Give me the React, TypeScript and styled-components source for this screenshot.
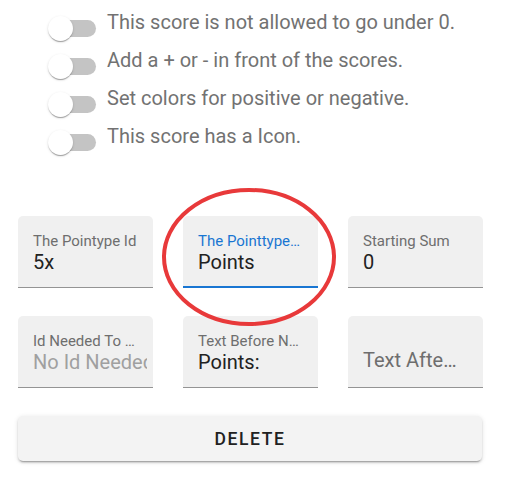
import React from "react";
import styled, { createGlobalStyle } from "styled-components";

const GlobalStyle = createGlobalStyle`
  html, body { margin: 0; padding: 0; background: #ffffff; }
  body { font-family: Roboto, "Liberation Sans", Arial, sans-serif; }
`;

const Page = styled.div`
  position: relative;
  width: 515px;
  height: 481px;
  padding: 9px 18px 0 18px;
  box-sizing: border-box;
`;

const SwitchList = styled.div`
  display: flex;
  flex-direction: column;
  padding-left: 30px;
`;

const SwitchRow = styled.div`
  display: flex;
  align-items: flex-start;
  height: 38px;
`;

const SwitchBox = styled.div`
  position: relative;
  width: 49px;
  height: 38px;
  flex-shrink: 0;
`;

const Track = styled.div`
  position: absolute;
  left: 6px;
  top: 10.5px;
  width: 42px;
  height: 17px;
  border-radius: 8.5px;
  background: #c4c4c4;
`;

const Thumb = styled.div`
  position: absolute;
  left: 0;
  top: 6.5px;
  width: 25px;
  height: 25px;
  border-radius: 50%;
  background: #ffffff;
  box-shadow: 0 2px 1px -1px rgba(0, 0, 0, 0.2), 0 1px 1px 0 rgba(0, 0, 0, 0.14),
    0 1px 3px 0 rgba(0, 0, 0, 0.12);
`;

const SwitchLabel = styled.span`
  margin-left: 10px;
  margin-top: 0;
  font-size: 20px;
  line-height: 26px;
  color: #727272;
  white-space: nowrap;
`;

const FieldGrid = styled.div`
  display: grid;
  grid-template-columns: repeat(3, 135px);
  column-gap: 30px;
  row-gap: 28px;
  margin-top: 55px;
`;

const Field = styled.div<{ $focused?: boolean }>`
  position: relative;
  height: 72px;
  box-sizing: border-box;
  background: #f0f0f0;
  border-radius: 5px 5px 0 0;
  border-bottom: ${(p) => (p.$focused ? "2px solid #1976d2" : "1px solid #949494")};
  padding: 0 6px 0 15px;
  display: flex;
  flex-direction: column;
  overflow: hidden;
`;

const FieldLabel = styled.div<{ $focused?: boolean }>`
  margin-top: 16px;
  font-size: 15px;
  line-height: 18px;
  color: ${(p) => (p.$focused ? "#1976d2" : "#6e6e6e")};
  white-space: nowrap;
`;

const FloatingLabel = styled.div`
  margin-top: 32px;
  font-size: 20px;
  line-height: 24px;
  color: #6e6e6e;
  white-space: nowrap;
`;

const FieldValue = styled.div<{ $placeholder?: boolean }>`
  margin-top: 0;
  font-size: 20px;
  line-height: 24px;
  color: ${(p) => (p.$placeholder ? "#a0a0a0" : "#222222")};
  white-space: nowrap;
  overflow: hidden;
`;

const DeleteButton = styled.button`
  display: flex;
  align-items: center;
  justify-content: center;
  width: 464px;
  height: 45px;
  margin-top: 28px;
  border: none;
  border-radius: 5px;
  background: #f3f3f3;
  box-shadow: 0 3px 1px -2px rgba(0, 0, 0, 0.2), 0 2px 2px 0 rgba(0, 0, 0, 0.14),
    0 1px 5px 0 rgba(0, 0, 0, 0.12);
  font-family: Roboto, "Liberation Sans", Arial, sans-serif;
  font-size: 17.5px;
  font-weight: 500;
  letter-spacing: 1.6px;
  color: #212121;
  padding: 0;
`;

const Annotation = styled.svg`
  position: absolute;
  left: 160px;
  top: 186px;
  width: 178px;
  height: 142px;
  pointer-events: none;
`;

const switches = [
  "This score is not allowed to go under 0.",
  "Add a + or - in front of the scores.",
  "Set colors for positive or negative.",
  "This score has a Icon.",
];

type FieldDef = {
  label: string;
  value?: string;
  placeholder?: string;
  focused?: boolean;
};

const fields: FieldDef[] = [
  { label: "The Pointype Id", value: "5x" },
  { label: "The Pointtype…", value: "Points", focused: true },
  { label: "Starting Sum", value: "0" },
  { label: "Id Needed To …", placeholder: "No Id Needed" },
  { label: "Text Before N…", value: "Points:" },
  { label: "Text Afte…" },
];

export default function App() {
  return (
    <>
      <GlobalStyle />
      <Page>
        <SwitchList>
          {switches.map((s) => (
            <SwitchRow key={s}>
              <SwitchBox>
                <Track />
                <Thumb />
              </SwitchBox>
              <SwitchLabel>{s}</SwitchLabel>
            </SwitchRow>
          ))}
        </SwitchList>
        <FieldGrid>
          {fields.map((f) => (
            <Field key={f.label} $focused={f.focused}>
              {f.value === undefined && f.placeholder === undefined ? (
                <FloatingLabel>{f.label}</FloatingLabel>
              ) : (
                <>
                  <FieldLabel $focused={f.focused}>{f.label}</FieldLabel>
                  <FieldValue $placeholder={!!f.placeholder}>
                    {f.value ?? f.placeholder}
                  </FieldValue>
                </>
              )}
            </Field>
          ))}
        </FieldGrid>
        <DeleteButton>DELETE</DeleteButton>
        <Annotation viewBox="0 0 178 142">
          <ellipse cx="89" cy="71" rx="85" ry="67" fill="none" stroke="#e8393a" strokeWidth="4" />
        </Annotation>
      </Page>
    </>
  );
}
